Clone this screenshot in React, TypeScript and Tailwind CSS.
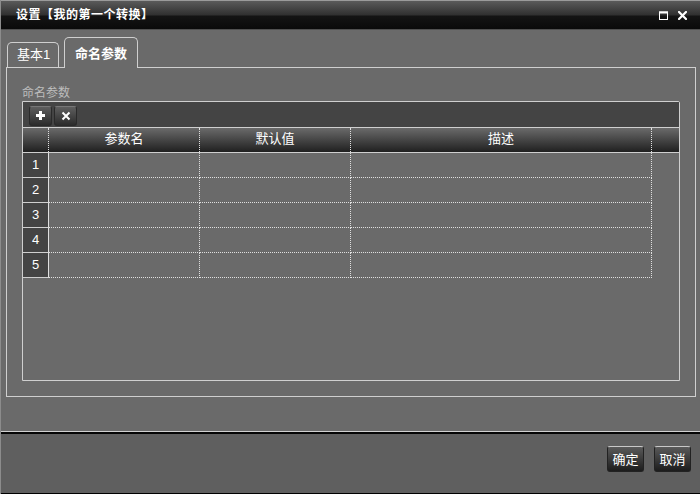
const cols = [
  { label: "参数名", w: "w-[151px]" },
  { label: "默认值", w: "w-[151px]" },
  { label: "描述", w: "w-[301px]" },
];

const rows = [1, 2, 3, 4, 5];

const font = "font-['Liberation_Sans','Noto_Sans_CJK_SC',sans-serif]";

function ToolButton({ children }: { children: React.ReactNode }) {
  return (
    <div className="w-[23px] h-[20px] rounded-[3px] border border-[#2a2a2a] border-t-[#777] bg-[linear-gradient(#5e5e5e,#2c2c2c)] flex items-center justify-center">
      {children}
    </div>
  );
}

function FooterButton({ label }: { label: string }) {
  return (
    <button className="w-[37px] h-[26px] rounded-[3px] border border-[#222] border-t-[#c8c8c8] bg-[linear-gradient(#5a5a5a,#1c1c1c)] text-white text-[13px] leading-none flex items-center justify-center">
      {label}
    </button>
  );
}

export default function App() {
  return (
    <div className={`w-[700px] h-[494px] flex flex-col bg-[#6a6a6a] border-l border-[#8c8c8c] overflow-hidden ${font}`}>
      {/* Title bar */}
      <div className="h-[30px] shrink-0 border-t border-[#9a9a9a] border-b border-b-[#505050] bg-[linear-gradient(#5a5a5a_0px,#303030_14px,#141414_15px,#0a0a0a_28px)] flex items-center pl-[15px] pr-[13px]">
        <span className="text-white text-[12px] font-bold tracking-[0.5px]">设置【我的第一个转换】</span>
        <div className="ml-auto flex items-center gap-[10px]">
          <svg width="9" height="9" viewBox="0 0 9 9">
            <rect x="0.5" y="1" width="8" height="7.5" fill="none" stroke="#fff" strokeWidth="1" />
            <rect x="0" y="0.5" width="9" height="2" fill="#fff" />
          </svg>
          <svg width="9" height="9" viewBox="0 0 9 9">
            <path d="M1 1 L8 8 M8 1 L1 8" stroke="#fff" strokeWidth="2.2" strokeLinecap="square" />
          </svg>
        </div>
      </div>

      {/* Body */}
      <div className="flex-1 flex flex-col pl-[5px] pr-[4px] pt-[7px]">
        {/* Tabs */}
        <div className="flex items-end h-[30px] relative z-10">
          <div className="w-[52px] h-[25px] ml-[1px] border border-b-0 border-[#cfcfcf] rounded-t-[5px] flex items-center pl-[9px] text-white text-[13px]">
            基本1
          </div>
          <div className="w-[74px] h-[31px] ml-[5px] border border-b-0 border-[#cfcfcf] rounded-t-[5px] bg-[#6a6a6a] flex items-center pl-[10px] pt-[2px] text-white text-[13px] font-bold -mb-px">
            命名参数
          </div>
        </div>

        {/* Panel */}
        <div className="h-[330px] border border-[#cfcfcf] flex flex-col pl-[15px] pr-[15px] pb-[15px]">
          <div className="h-[33px] flex items-end pb-0 text-[#bdbdbd] text-[12px] leading-[16px]">命名参数</div>
          <div className="flex-1 border border-[#cfcfcf] rounded-tr-[2px] flex flex-col">
            {/* Toolbar */}
            <div className="h-[25px] bg-[#444] flex items-center gap-[2px] pl-[6px] pt-[2px]">
              <ToolButton>
                <svg width="11" height="11" viewBox="0 0 11 11">
                  <path d="M5.5 1 V10 M1 5.5 H10" stroke="#fff" strokeWidth="3" />
                </svg>
              </ToolButton>
              <ToolButton>
                <svg width="10" height="10" viewBox="0 0 10 10">
                  <path d="M1.5 1.5 L8.5 8.5 M8.5 1.5 L1.5 8.5" stroke="#fff" strokeWidth="2" />
                </svg>
              </ToolButton>
            </div>

            {/* Header */}
            <div className="h-[26px] border-y border-[#cfcfcf] bg-[linear-gradient(#6a6a6a,#202020)] flex text-white text-[13px]">
              <div className="w-[26px] border-r border-dotted border-[#e0e0e0]" />
              {cols.map((c) => (
                <div key={c.label} className={`${c.w} border-r border-dotted border-[#e0e0e0] flex items-center justify-center pb-[2px]`}>
                  {c.label}
                </div>
              ))}
            </div>

            {/* Rows */}
            {rows.map((n) => (
              <div key={n} className="h-[25px] flex">
                <div className="w-[26px] bg-[#444] border-b border-[#cfcfcf] border-r border-r-[#e0e0e0] border-r-dotted flex items-center justify-center text-white text-[13px]">
                  {n}
                </div>
                {cols.map((c) => (
                  <div key={c.label} className={`${c.w} border-r border-b border-dotted border-[#e0e0e0]`} />
                ))}
              </div>
            ))}
          </div>
        </div>
      </div>

      {/* Footer */}
      <div className="h-[63px] shrink-0 border-t border-[#d0d0d0] flex flex-col">
        <div className="h-[2px] bg-[#050505]" />
        <div className="flex-1 bg-[#5f5f5f] border-b border-black flex items-start justify-end gap-[10px] pt-[12px] pr-[9px]">
          <FooterButton label="确定" />
          <FooterButton label="取消" />
        </div>
      </div>
    </div>
  );
}
